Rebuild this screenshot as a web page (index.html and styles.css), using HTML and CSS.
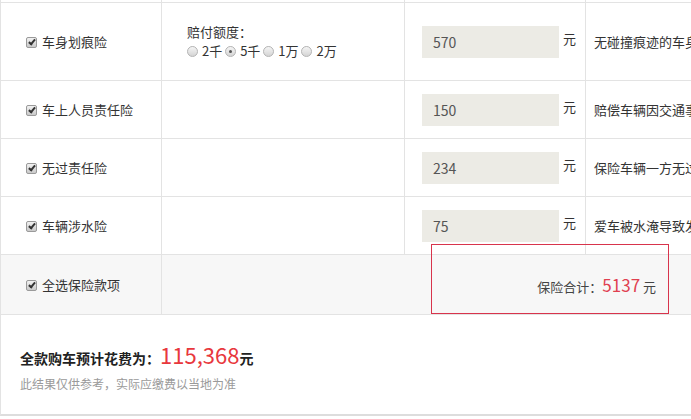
FILE: index.html
```html
<!DOCTYPE html>
<html lang="zh-CN">
<head>
    <meta charset="UTF-8">
    <title>保险计算</title>
    <link rel="stylesheet" href="styles.css">
</head>
<body>
    <div class="page">
        <table class="ins-table">
            <tr class="prev-row">
                <td class="c1"></td><td class="c2"></td><td class="c3"></td><td class="c4"></td>
            </tr>
            <tr class="row-tall">
                <td class="c1"><span class="check"></span>车身划痕险</td>
                <td class="c2">
                    <div class="opt-title">赔付额度：</div>
                    <div class="opts">
                        <span class="radio"></span>2千
                        <span class="radio on"></span>5千
                        <span class="radio"></span>1万
                        <span class="radio"></span>2万
                    </div>
                </td>
                <td class="c3"><div class="cost"><span class="price">570</span><span class="unit">元</span></div></td>
                <td class="c4">无碰撞痕迹的车身表面油漆单独划伤</td>
            </tr>
            <tr>
                <td class="c1"><span class="check"></span>车上人员责任险</td>
                <td class="c2"></td>
                <td class="c3"><div class="cost"><span class="price">150</span><span class="unit">元</span></div></td>
                <td class="c4">赔偿车辆因交通事故造成的车内人员伤亡</td>
            </tr>
            <tr>
                <td class="c1"><span class="check"></span>无过责任险</td>
                <td class="c2"></td>
                <td class="c3"><div class="cost"><span class="price">234</span><span class="unit">元</span></div></td>
                <td class="c4">保险车辆一方无过错时的赔偿责任</td>
            </tr>
            <tr>
                <td class="c1"><span class="check"></span>车辆涉水险</td>
                <td class="c2"></td>
                <td class="c3"><div class="cost"><span class="price">75</span><span class="unit">元</span></div></td>
                <td class="c4">爱车被水淹导致发动机损坏的赔偿</td>
            </tr>
            <tr class="total-row">
                <td class="c1"><span class="check"></span>全选保险款项</td>
                <td colspan="3">
                    <div class="total">保险合计：<em>5137</em> 元</div>
                </td>
            </tr>
        </table>

        <div class="summary">
            <div class="sum-line">全款购车预计花费为：<em>115,368</em>元</div>
            <div class="sum-note">此结果仅供参考，实际应缴费以当地为准</div>
        </div>

        <!-- highlight box over the total -->
        <div class="mark"></div>
    </div>
</body>
</html>
```

FILE: styles.css
```css
body {
    margin: 0;
    background-color: #ffffff;
    font-family: "Noto Sans CJK SC", "Noto Sans", sans-serif;
    color: #333333;
    overflow: hidden;
}

.page {
    position: relative;
    width: 900px;
}

.ins-table {
    border-collapse: collapse;
    width: 900px;
    font-size: 13px;
    table-layout: fixed;
}

.ins-table td {
    border: 1px solid #e3e3e3;
    padding: 0;
    height: 57px;
    vertical-align: middle;
}

.ins-table .c1 {
    width: 161px;
    padding-left: 25px;
    box-sizing: border-box;
}

.ins-table .c2 {
    width: 243px;
    padding-left: 25px;
    box-sizing: border-box;
}

.ins-table .c3 {
    width: 181px;
    padding-left: 17px;
    box-sizing: border-box;
}

.ins-table .c4 {
    padding-left: 8px;
    white-space: nowrap;
    overflow: hidden;
}

.ins-table .prev-row td {
    height: 2px;
    border-top: none;
}

.ins-table .row-tall td {
    height: 77px;
}

.check {
    display: inline-block;
    width: 9px;
    height: 9px;
    border: 1px solid #9a9a9a;
    border-radius: 2px;
    background: linear-gradient(#f2f2f2, #c9c9c9);
    margin-right: 5px;
    vertical-align: -1px;
    position: relative;
}

.check::after {
    content: "";
    position: absolute;
    left: 3px;
    top: 0px;
    width: 2px;
    height: 5px;
    border: solid #333333;
    border-width: 0 2px 2px 0;
    transform: rotate(40deg);
}

.opt-title {
    margin-bottom: 1px;
    line-height: 18px;
}

.opts {
    line-height: 18px;
}

.radio {
    display: inline-block;
    width: 9px;
    height: 9px;
    border: 1px solid #b5b5b5;
    border-radius: 50%;
    background: linear-gradient(#f5f5f5, #d4d4d4);
    vertical-align: -1px;
    margin-right: 4px;
    position: relative;
}

.radio.on::after {
    content: "";
    position: absolute;
    left: 3px;
    top: 3px;
    width: 3px;
    height: 3px;
    border-radius: 50%;
    background-color: #555555;
}

.cost {
    display: flex;
    align-items: center;
}

.price {
    width: 126px;
    height: 32px;
    line-height: 32px;
    padding-left: 11px;
    background-color: #ecebe5;
    color: #555555;
    font-size: 14px;
}

.unit {
    margin-left: 4px;
    margin-top: -6px;
}

.total-row td {
    background-color: #f7f7f7;
    height: 59px;
}

.total {
    width: 494px;
    text-align: right;
    color: #444444;
    font-size: 13px;
}

.total em {
    font-style: normal;
    font-size: 17px;
    color: #e04050;
}

.summary {
    height: 101px;
    border-left: 1px solid #e3e3e3;
    border-bottom: 2px solid #dddddd;
    padding-left: 19px;
    box-sizing: border-box;
    padding-top: 24px;
}

.sum-line {
    font-size: 14px;
    font-weight: bold;
    color: #222222;
    line-height: 30px;
}

.sum-line em {
    font-style: normal;
    font-weight: normal;
    font-size: 22px;
    color: #e8383d;
}

.sum-note {
    font-size: 12px;
    color: #9a9a9a;
    margin-top: 2px;
}

.mark {
    position: absolute;
    left: 431px;
    top: 244px;
    width: 236px;
    height: 68px;
    border: 1px solid #d8344c;
}
```
